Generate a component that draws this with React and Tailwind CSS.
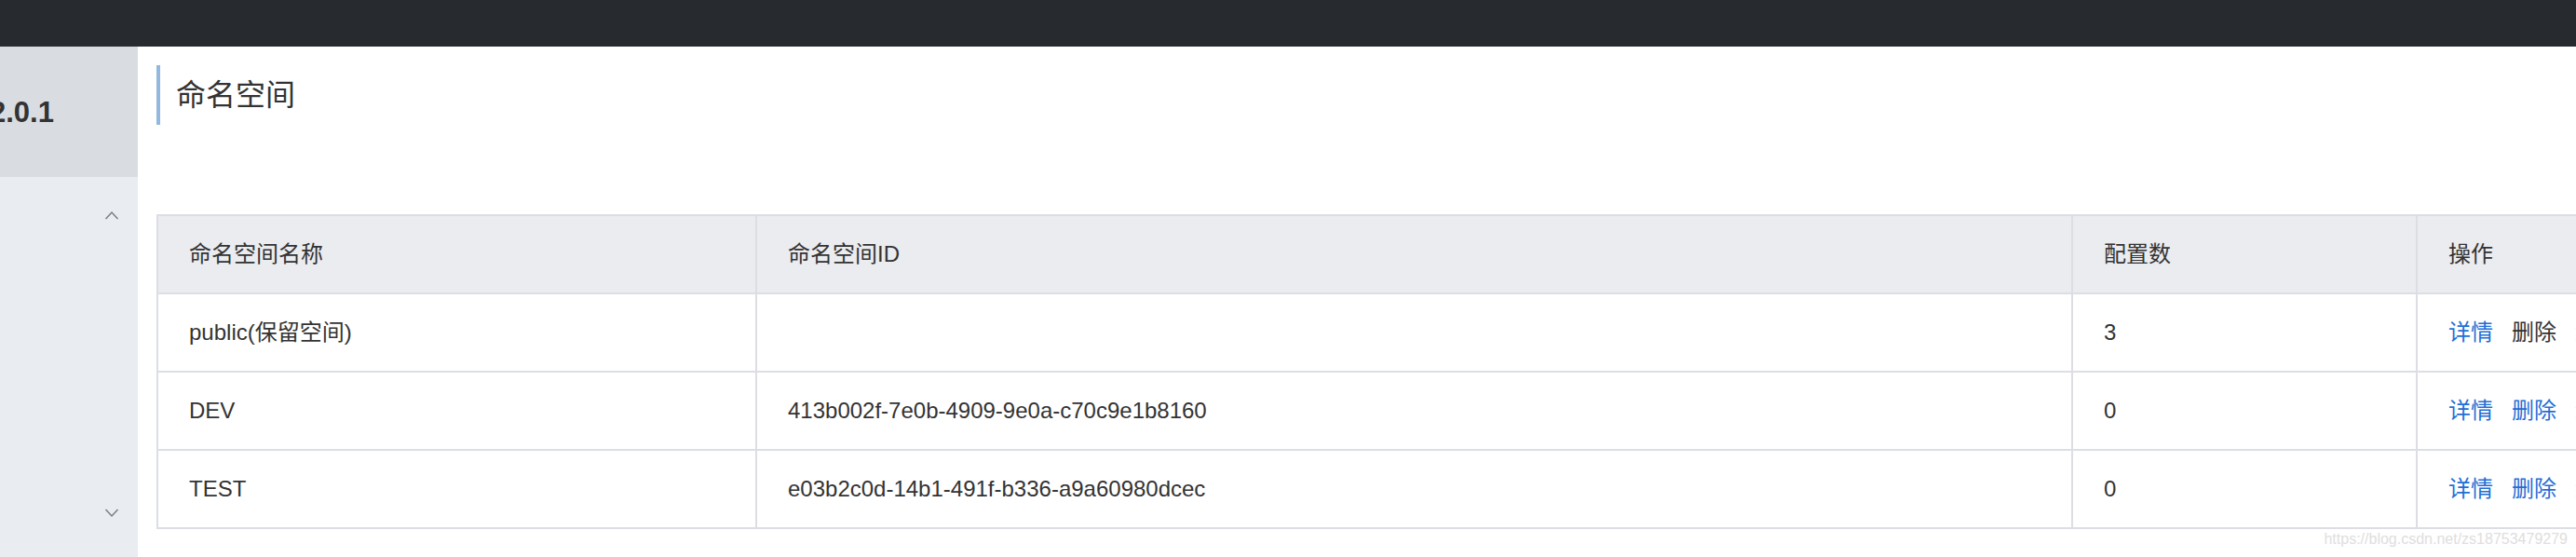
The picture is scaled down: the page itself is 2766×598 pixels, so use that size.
import React from "react";

const FONT = { fontFamily: '"Liberation Sans", "Noto Sans CJK SC", sans-serif' };

const rows = [
  { name: "public(保留空间)", id: "", count: 3, canDelete: false },
  { name: "DEV", id: "413b002f-7e0b-4909-9e0a-c70c9e1b8160", count: 0, canDelete: true },
  { name: "TEST", id: "e03b2c0d-14b1-491f-b336-a9a60980dcec", count: 0, canDelete: true },
];

const Chevron = ({ up }) => (
  <svg width="16" height="10" viewBox="0 0 16 10" fill="none">
    <path
      d={up ? "M1.5 9 L8 2 L14.5 9" : "M1.5 1 L8 8 L14.5 1"}
      stroke="#7a7d82"
      strokeWidth="1.5"
    />
  </svg>
);

const Cell = ({ w, children, className = "" }) => (
  <div className={`${w} shrink-0 border-l-2 border-[#dcdee3] pl-[33px] flex items-center ${className}`}>
    {children}
  </div>
);

const App = () => {
  return (
    <div className="relative w-[2766px] h-[598px] overflow-hidden flex flex-col bg-white text-[#333]" style={FONT}>
      {/* TOP BAR */}
      <div className="h-[50px] shrink-0 bg-[#272a2f]" />

      <div className="flex flex-1 min-h-0">
        {/* SIDEBAR */}
        <div className="w-[148px] shrink-0 flex flex-col bg-[#e9ecf0] overflow-hidden">
          <div className="h-[140px] shrink-0 bg-[#d9dce1] flex items-center">
            <span className="ml-[-11px] text-[31px] font-bold text-[#333] leading-none whitespace-nowrap">
              2.0.1
            </span>
          </div>
          <div className="flex-1 flex flex-col justify-between items-end pr-[20px] pt-[36px] pb-[42px]">
            <Chevron up />
            <Chevron />
          </div>
        </div>

        {/* MAIN */}
        <div className="flex-1 min-w-0 overflow-hidden pl-[20px] pt-[20px]">
          <div className="h-[64px] border-l-4 border-[#93b8e0] pl-[17px] flex items-center">
            <h1 className="text-[32px] leading-none font-normal text-[#333]">命名空间</h1>
          </div>

          {/* TABLE */}
          <div className="mt-[96px] w-[2830px] text-[24px]">
            <div className="flex h-[86px] bg-[#ebecf0] border-t-2 border-b-2 border-[#dcdee3]">
              <Cell w="w-[643px]">命名空间名称</Cell>
              <Cell w="w-[1413px]">命名空间ID</Cell>
              <Cell w="w-[370px]">配置数</Cell>
              <Cell w="w-[404px]">操作</Cell>
            </div>

            {rows.map((r) => (
              <div key={r.name} className="flex h-[84px] border-b-2 border-[#dcdee3]">
                <Cell w="w-[643px]">{r.name}</Cell>
                <Cell w="w-[1413px]">{r.id}</Cell>
                <Cell w="w-[370px]">{r.count}</Cell>
                <Cell w="w-[404px]" className="gap-[20px] whitespace-nowrap">
                  <span className="text-[#1f6fd6]">详情</span>
                  <span className={r.canDelete ? "text-[#1f6fd6]" : "text-[#333]"}>删除</span>
                  <span className="text-[#1f6fd6]">编辑</span>
                </Cell>
              </div>
            ))}
          </div>
        </div>
      </div>

      {/* WATERMARK */}
      <div className="absolute right-[9px] bottom-[9px] text-[16px] leading-[20px] text-[#dedede] whitespace-nowrap">
        https://blog.csdn.net/zs18753479279
      </div>
    </div>
  );
};

export default App;
